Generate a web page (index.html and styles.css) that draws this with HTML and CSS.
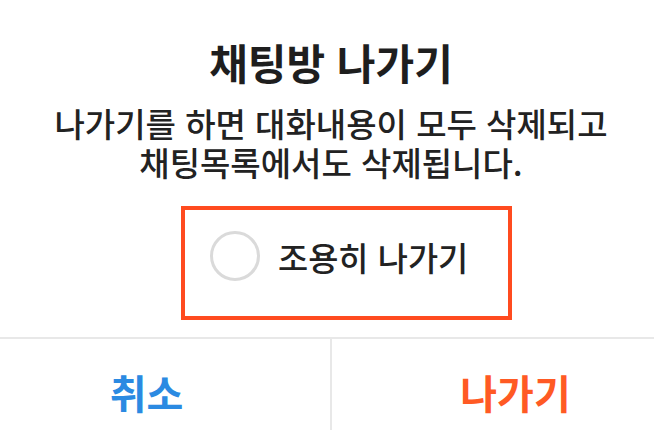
FILE: index.html
```html
<!DOCTYPE html>
<html lang="ko">
<head>
  <meta charset="UTF-8">
  <meta name="viewport" content="width=device-width, initial-scale=1.0">
  <title>채팅방 나가기</title>
  <link rel="stylesheet" href="styles.css">
</head>
<body>
  <div class="dialog">
    <div class="dialog-body">
      <h1 class="dialog-title">채팅방 나가기</h1>
      <p class="dialog-text">나가기를 하면 대화내용이 모두 삭제되고<br>채팅목록에서도 삭제됩니다.</p>
      <div class="highlight">
        <label class="quiet-option">
          <span class="radio"></span>
          <span class="quiet-label">조용히 나가기</span>
        </label>
      </div>
    </div>
    <div class="dialog-actions">
      <button class="action cancel">취소</button>
      <button class="action leave">나가기</button>
    </div>
  </div>
</body>
</html>
```

FILE: styles.css
```css
body {
  margin: 0;
  background: #fff;
  font-family: "Noto Sans CJK KR", "Noto Sans", sans-serif;
  color: #222;
  overflow: hidden;
}

.dialog {
  width: 736px;
  margin-left: -37px;
}

.dialog-body {
  padding-top: 37px;
  text-align: center;
}

.dialog-title {
  margin: 0;
  font-size: 42px;
  line-height: 50px;
  font-weight: 700;
  color: #1e1e1e;
}

.dialog-text {
  margin: 17px 0 0;
  font-size: 33px;
  line-height: 39px;
  font-weight: 500;
  color: #222;
}

.highlight {
  width: 323px;
  height: 106px;
  margin: 24px 0 0 218px;
  border: 4px solid #ff4b1f;
}

.quiet-option {
  display: flex;
  align-items: center;
  gap: 18px;
  padding: 21px 0 0 25px;
}

.radio {
  width: 44px;
  height: 44px;
  border: 3px solid #dadada;
  border-radius: 50%;
}

.quiet-label {
  font-size: 32.8px;
  font-weight: 500;
  color: #222;
}

.dialog-actions {
  display: flex;
  margin-top: 17px;
  border-top: 2px solid #e8e8e8;
}

.action {
  flex: 1;
  height: 106px;
  border: none;
  background: none;
  font-family: inherit;
  font-size: 40px;
  font-weight: 700;
  padding: 0;
}

.action + .action {
  border-left: 2px solid #e8e8e8;
}

.cancel {
  color: #2b8ae2;
}

.leave {
  color: #ff5a24;
}
```
